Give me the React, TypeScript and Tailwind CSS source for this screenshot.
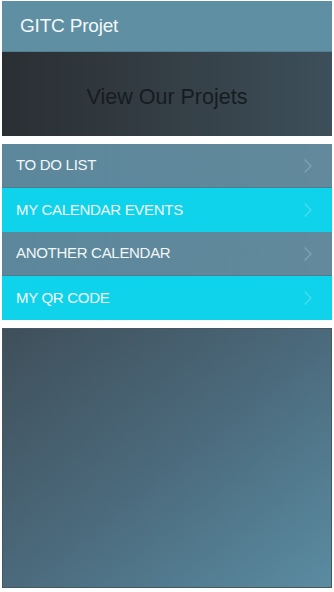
import { ChevronRight } from 'lucide-react';

const items = [
  { label: 'TO DO LIST', tone: 'gray' },
  { label: 'MY CALENDAR EVENTS', tone: 'cyan' },
  { label: 'ANOTHER CALENDAR', tone: 'gray' },
  { label: 'MY QR CODE', tone: 'cyan' },
];

const App = () => {
  return (
    <div className="w-[334px] h-[592px] bg-white px-[2px] pt-px flex flex-col font-['Liberation_Sans',Arial,sans-serif]">
      {/* header */}
      <div className="h-[51px] bg-[#5f8fa3] flex items-center px-[18px] pt-[1px] border-b border-[#557f92]">
        <h1 className="text-[19px] text-[#f4f8fa] tracking-[-0.2px]">GITC Projet</h1>
      </div>

      {/* banner */}
      <div className="h-[84px] bg-linear-to-r from-[#2a2f33] via-[#343e45] to-[#3d4f5a] flex items-center justify-center pt-[6px]">
        <span className="text-[21.5px] text-[#161c21]">View Our Projets</span>
      </div>

      <div className="h-[8px]" />

      {/* menu */}
      <div className="flex flex-col">
        {items.map((item) => (
          <div
            key={item.label}
            className={
              item.tone === 'gray'
                ? 'h-[44px] flex items-center justify-between pl-[14px] pr-[12px] bg-linear-to-r from-[#5c879b] to-[#62899c] border-b border-[#56798a]'
                : 'h-[44px] flex items-center justify-between pl-[14px] pr-[12px] bg-[#0fd3ea]'
            }
          >
            <span className="text-[15px] text-[#f2f7f9] tracking-[-0.3px]">{item.label}</span>
            <ChevronRight
              size={24}
              strokeWidth={1.4}
              className={item.tone === 'gray' ? 'text-[#7ca4b7]' : 'text-[#45dcef]'}
            />
          </div>
        ))}
      </div>

      <div className="h-[8px]" />

      {/* bottom panel */}
      <div className="h-[260px] bg-linear-to-br from-[#3f4f5a] via-[#4b6a7c] to-[#5a8ca2] border border-[#46585f]" />
    </div>
  );
};

export default App;
